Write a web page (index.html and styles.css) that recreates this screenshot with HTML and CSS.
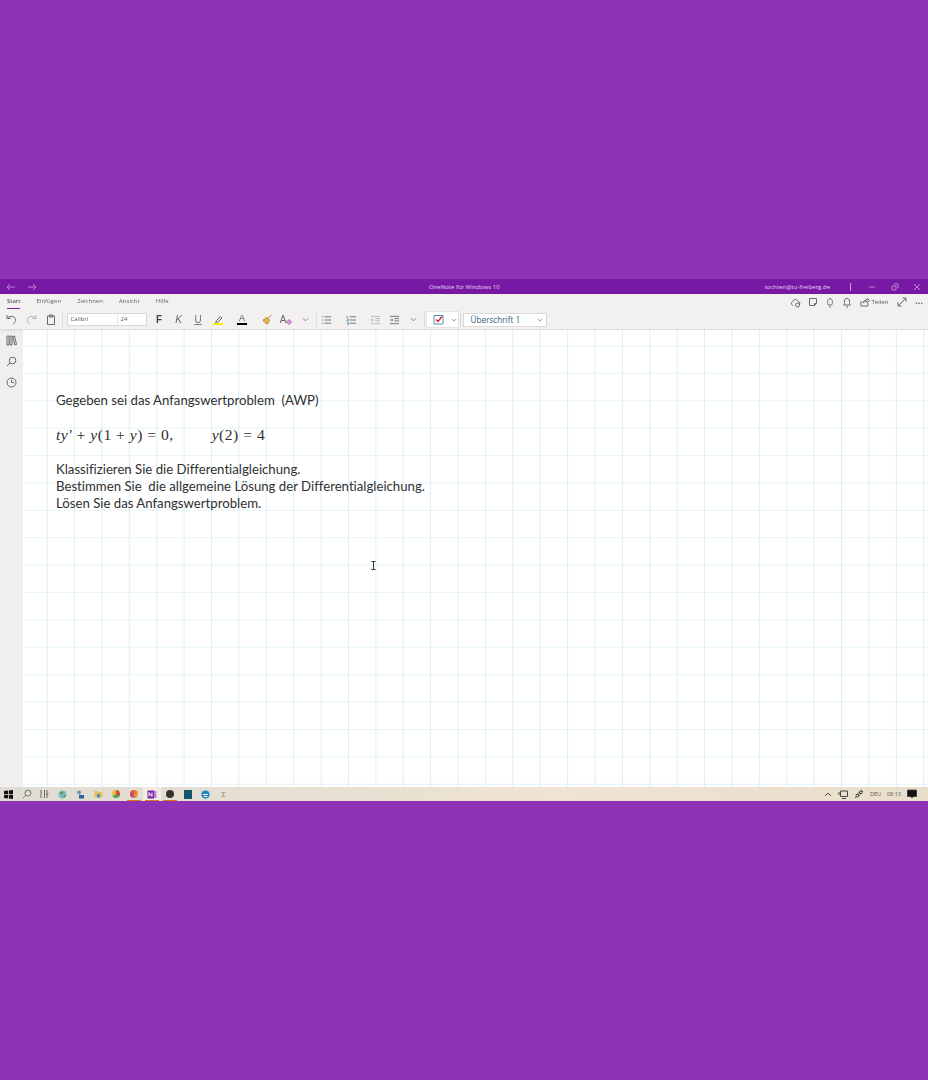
FILE: index.html
```html
<!DOCTYPE html>
<html lang="de">
<head>
    <meta charset="UTF-8">
    <meta name="viewport" content="width=device-width, initial-scale=1.0">
    <title>OneNote für Windows 10</title>
    <link rel="stylesheet" href="styles.css">
</head>
<body>
    <div class="screen">
        <div class="titlebar">
            <div class="nav-arrows">
                <svg width="10" height="10" viewBox="0 0 10 10"><path d="M9 5H1M4 2L1 5l3 3"/></svg>
                <svg width="10" height="10" viewBox="0 0 10 10"><path d="M1 5h8M6 2l3 3-3 3"/></svg>
            </div>
            <div class="app-title">OneNote für Windows 10</div>
            <div class="title-right">
                <span class="account">tochten@tu-freiberg.de</span>
                <span class="title-sep"></span>
                <svg class="win-min" width="8" height="8" viewBox="0 0 8 8"><path d="M1 4h6"/></svg>
                <svg class="win-restore" width="8" height="8" viewBox="0 0 8 8"><path d="M3 1h4v4M1 3h4v4H1z"/></svg>
                <svg class="win-close" width="8" height="8" viewBox="0 0 8 8"><path d="M1 1l6 6M7 1L1 7"/></svg>
            </div>
        </div>

        <div class="ribbon">
            <div class="tabs">
                <div class="tab-list">
                    <span class="tab active">Start</span>
                    <span class="tab">Einfügen</span>
                    <span class="tab">Zeichnen</span>
                    <span class="tab">Ansicht</span>
                    <span class="tab">Hilfe</span>
                </div>
                <div class="tab-tools">
                    <svg width="11" height="11" viewBox="0 0 11 11"><path d="M3 8.500C1 8 .8 5 2.700 4.500 3.500 2 7.500 2 8.300 4.500 10 5 10.500 7 9 8"/><circle cx="7.500" cy="8" r="2" class="fill-dark"/></svg>
                    <svg width="10" height="10" viewBox="0 0 10 10"><path d="M1.500 1.500h7v5l-2 2h-5zM6.500 8.500v-2h2"/></svg>
                    <svg width="10" height="11" viewBox="0 0 10 11"><path d="M3.500 8C2 6.500 2 2 5 1.500 8 2 8 6.500 6.500 8zM4 10h2"/></svg>
                    <svg width="10" height="11" viewBox="0 0 10 11"><path d="M1.500 8c1-1 1-2 1-4 0-3.500 5-3.500 5 0 0 2 0 3 1 4zM4 10h2"/></svg>
                    <span class="share">
                        <svg width="10" height="10" viewBox="0 0 10 10"><path d="M1 4v5h7V6M3 6c0-2 2-3 4-3V1.500L9.500 3.500 7 5.500V4.300C5 4.300 4 5 3 6z"/></svg>
                        Teilen
                    </span>
                    <svg class="expand" width="10" height="10" viewBox="0 0 10 10"><path d="M1 9l8-8M5.500 1H9v3.500M1 5.500V9h3.500"/></svg>
                    <span class="more">···</span>
                </div>
            </div>

            <div class="toolbar">
                <div class="tool-group undo-group">
                    <span class="cell"><svg width="11" height="11" viewBox="0 0 11 11"><path d="M1 1v3.500h3.500M1.200 4.500C3 2 7 1.500 9 4c1.500 2.500.5 4.500-2 6"/></svg></span>
                    <span class="cell"><svg class="faded" width="11" height="11" viewBox="0 0 11 11"><path d="M10 1v3.500H6.500M9.800 4.500C8 2 4 1.500 2 4 .5 6.500 1.500 8.500 4 10"/></svg></span>
                    <span class="cell"><svg width="10" height="11" viewBox="0 0 10 11"><path d="M1.500 2h7v8.500h-7zM3.500 1h3v2h-3z"/></svg></span>
                </div>
                <span class="divider"></span>
                <div class="font-box">
                    <span class="font-name">Calibri</span>
                    <span class="font-size">24</span>
                </div>
                <div class="tool-group format-group">
                    <span class="cell w20 fmt bold">F</span>
                    <span class="cell w19 fmt italic">K</span>
                    <span class="cell w20 fmt underline">U</span>
                    <span class="cell w20 swatch-icon">
                        <svg width="9" height="8" viewBox="0 0 9 8"><path d="M1.500 7.500l1-2L6.500 1.700 8 3 4 7z"/></svg>
                        <span class="swatch yellow"></span>
                    </span>
                    <span class="cell w28 swatch-icon">
                        <span class="letter-a">A</span>
                        <span class="swatch black"></span>
                    </span>
                    <span class="cell w22"><svg width="11" height="11" viewBox="0 0 11 11"><path class="brush" d="M1 6l4-2.500L7.500 6 5.500 10C3.500 9.500 2 8 1 6z"/><path class="brush" d="M6 4l3.500-3"/></svg></span>
                    <span class="cell w16 style-a">A<svg width="6" height="6" viewBox="0 0 6 6"><path class="pink" d="M3 .5L5.500 3 3 5.500.5 3z"/></svg></span>
                    <span class="cell w22"><svg class="chevron" width="7" height="5" viewBox="0 0 8 5"><path d="M1 1l3 3 3-3"/></svg></span>
                </div>
                <span class="divider"></span>
                <div class="tool-group list-group">
                    <span class="cell w18"><svg width="11" height="10" viewBox="0 0 12 11"><path class="blue" d="M1 2h1.500M1 5.500h1.500M1 9h1.500"/><path d="M4 2h7M4 5.500h7M4 9h7"/></svg></span>
                    <span class="cell w31"><svg width="11" height="10" viewBox="0 0 12 11"><path class="blue" d="M1 1v2.500M1 4.500h1.500v1.500H1v1M1 8h1.500v2.500H1"/><path d="M4 2h7M4 5.500h7M4 9h7"/></svg></span>
                    <span class="cell w17"><svg class="faded" width="11" height="10" viewBox="0 0 12 11"><path d="M1 1.500h10M6 4h5M6 6.500h5M1 9.500h10M4.500 5.500H1M2.500 4L1 5.500 2.500 7"/></svg></span>
                    <span class="cell w22"><svg width="11" height="10" viewBox="0 0 12 11"><path d="M1 1.500h10M6 4h5M6 6.500h5M1 9.500h10"/><path class="blue" d="M1 5.500h3.500M3 4l1.500 1.500L3 7"/></svg></span>
                    <span class="cell w16"><svg class="chevron" width="7" height="5" viewBox="0 0 8 5"><path d="M1 1l3 3 3-3"/></svg></span>
                </div>
                <span class="divider divider-todo"></span>
                <div class="todo-box">
                    <svg width="11" height="11" viewBox="0 0 11 11"><path class="box" d="M1 1.500h9v8.500H1z"/><path class="check" d="M3 5.500l2 2 4-5"/></svg>
                    <svg class="chevron" width="6" height="4" viewBox="0 0 8 5"><path d="M1 1l3 3 3-3"/></svg>
                </div>
                <span class="divider divider-style"></span>
                <div class="style-box">
                    <span>Überschrift 1</span>
                    <svg class="chevron" width="6" height="4" viewBox="0 0 8 5"><path d="M1 1l3 3 3-3"/></svg>
                </div>
            </div>
        </div>

        <div class="workspace">
            <div class="sidebar">
                <svg width="11" height="11" viewBox="0 0 11 11"><path d="M1 1h2v9H1zM4 1h2v9H4zM6.800 1.500L8.500 1 10.500 9.500 8.800 10z"/></svg>
                <svg width="11" height="11" viewBox="0 0 11 11"><circle cx="6.500" cy="4.500" r="3.300"/><path d="M4 7L1 10"/></svg>
                <svg width="11" height="11" viewBox="0 0 11 11"><circle cx="5.500" cy="5.500" r="4.500"/><path d="M5.500 2.500v3h2.500"/></svg>
            </div>
            <div class="page">
                <p class="line">Gegeben sei das Anfangswertproblem&nbsp; (AWP)</p>
                <p class="formula"><i>ty′</i> + <i>y</i>(1 + <i>y</i>) = 0,<span class="formula-gap"><i>y</i>(2) = 4</span></p>
                <div class="tasks">
                    <p class="line">Klassifizieren Sie die Differentialgleichung.</p>
                    <p class="line">Bestimmen Sie&nbsp; die allgemeine Lösung der Differentialgleichung.</p>
                    <p class="line">Lösen Sie das Anfangswertproblem.</p>
                </div>
                <svg class="cursor" width="5" height="9" viewBox="0 0 5 9"><path d="M.5.500h4M.5 8.500h4M2.500.500v8"/></svg>
            </div>
        </div>

        <div class="taskbar">
            <div class="task-icons">
                <span class="task-icon"><svg width="9" height="9" viewBox="0 0 9 9"><path class="win" d="M0 1l4-.500V4H0zM4.800.400L9 0v4H4.800zM0 4.800h4v3.700L0 8zM4.800 4.800H9V9l-4.200-.600z"/></svg></span>
                <span class="task-icon"><svg width="10" height="10" viewBox="0 0 11 11"><circle cx="6.500" cy="4.500" r="3.300"/><path d="M4 7L1 10"/></svg></span>
                <span class="task-icon"><svg width="10" height="10" viewBox="0 0 10 10"><path d="M1 1v8M4.500 1v8M7 1v8M6 5h2.500"/></svg></span>
                <span class="task-icon"><svg width="9" height="9" viewBox="0 0 9 9"><circle class="globe" cx="4.500" cy="4.500" r="4"/><path class="globe-land" d="M2 2.500l2.500-1 1 2-2 1.500zM5 6l2.500-1L7 7.500z"/></svg></span>
                <span class="task-icon"><svg width="9" height="9" viewBox="0 0 9 9"><circle class="people-a" cx="3" cy="2.500" r="2"/><path class="people-b" d="M3 5h5v3.500H3z"/></svg></span>
                <span class="task-icon"><svg width="9" height="8" viewBox="0 0 9 8"><path class="folder" d="M.5 1h3l1 1h4v5.500h-8z"/><path class="folder-blue" d="M3 4h3v3.500H3z"/></svg></span>
                <span class="task-icon"><span class="blob chrome"></span></span>
                <span class="task-icon running"><span class="blob firefox"></span></span>
                <span class="task-icon running current"><svg width="10" height="9" viewBox="0 0 10 9"><path class="onenote-tab" d="M5 1h4.500v7H5z"/><path class="onenote" d="M.5.500h6.500v8H.5z"/><path class="onenote-n" d="M2 6.500v-4l3 4v-4"/></svg></span>
                <span class="task-icon running"><span class="blob obs"></span></span>
                <span class="task-icon"><span class="blob book"></span></span>
                <span class="task-icon"><svg width="9" height="9" viewBox="0 0 9 9"><circle class="edge" cx="4.500" cy="4.500" r="4"/><path class="edge-mark" d="M2 4.500h5M3 6.500h3.500"/></svg></span>
                <span class="task-icon"><span class="sum">Σ</span></span>
            </div>
            <div class="tray">
                <svg width="8" height="5" viewBox="0 0 8 5"><path d="M1 4l3-3 3 3"/></svg>
                <svg width="10" height="9" viewBox="0 0 10 9"><path d="M2.500 1h7v5.500h-7zM4 8.500h4M1 2v3"/></svg>
                <svg width="10" height="10" viewBox="0 0 10 10"><path d="M1 9l2-2M3 5l2 2M5 3l2 2M7 1l2 2"/><circle cx="3.500" cy="6.500" r="1.500"/><circle cx="6.500" cy="3.500" r="1.500"/></svg>
                <span class="tray-text">DEU</span>
                <span class="tray-text">08:13</span>
                <svg width="10" height="10" viewBox="0 0 10 10"><path class="note" d="M.5 1h9v6.500H6L5 9 4 7.500H.5z"/></svg>
            </div>
        </div>
    </div>
</body>
</html>
```

FILE: styles.css
```css
:root {
    --purple: #8e33b6;
    --title-purple: #7719a5;
    --ribbon: #f2f1f0;
    --icon: #6a6a6a;
    --grid: #dcf0f4;
}

body {
    margin: 0;
    min-height: 1080px;
    background-color: var(--purple);
    font-family: "Open Sans", "Noto Sans", sans-serif;
    overflow: hidden;
}

svg {
    display: block;
    flex: none;
    fill: none;
    stroke: var(--icon);
    stroke-width: 1;
}

/* the reference is a soft, scaled-down capture */
.screen {
    margin-top: 279px;
    height: 522px;
    display: flex;
    flex-direction: column;
    filter: blur(0.3px);
}

.titlebar {
    height: 15px;
    background-color: var(--title-purple);
    display: flex;
    align-items: center;
    justify-content: space-between;
    position: relative;
    color: #e9d5f2;
    font-size: 6px;
}

.titlebar svg {
    stroke: #b98ad2;
}

.nav-arrows {
    display: flex;
    gap: 11px;
    margin-left: 6px;
}

.app-title {
    position: absolute;
    left: 429px;
    top: 4px;
}

.title-right {
    display: flex;
    align-items: center;
}

.account {
    margin-right: 20px;
}

.title-sep {
    width: 1px;
    height: 8px;
    background-color: #c79ddb;
}

.win-min {
    margin-left: 17px;
}

.win-restore {
    margin-left: 14.5px;
}

.win-close {
    margin: 0 7px 0 14.5px;
}

.ribbon {
    height: 36px;
    background-color: var(--ribbon);
    border-bottom: 1px solid #dddcdb;
    box-sizing: border-box;
    box-shadow: 0 1px 2px rgba(0, 0, 0, 0.06);
    position: relative;
}

.tabs {
    height: 16px;
    display: flex;
    justify-content: space-between;
}

.tab-list {
    display: flex;
    gap: 16.2px;
    margin-left: 7px;
}

.tab {
    height: 15px;
    line-height: 15px;
    font-size: 6px;
    color: #666666;
    box-sizing: border-box;
}

.tab.active {
    color: #333333;
    border-bottom: 1.5px solid #7d1fa8;
}

.tab-tools {
    display: flex;
    align-items: center;
    gap: 7px;
    margin-right: 5px;
}

.share {
    display: flex;
    align-items: center;
    gap: 1.5px;
    margin-left: 1px;
    font-size: 6px;
    color: #555555;
}

.expand {
    margin: 0 1px 0 2px;
}

.more {
    font-size: 9px;
    font-weight: 700;
    color: #666666;
}

.toolbar {
    height: 19px;
    display: flex;
    align-items: center;
    padding-left: 2px;
}

.tool-group {
    display: flex;
    align-items: center;
}

.cell {
    width: 19.5px;
    display: flex;
    align-items: center;
    justify-content: center;
}

.w16 { width: 16px; }
.w17 { width: 17px; }
.w18 { width: 18px; }
.w19 { width: 19px; }
.w20 { width: 20px; }
.w22 { width: 22px; }
.w28 { width: 28px; }
.w31 { width: 31px; }

.undo-group {
    margin-right: 1px;
}

.faded {
    opacity: 0.45;
}

.divider {
    width: 1px;
    height: 14px;
    background-color: #dcdbda;
}

.divider-todo {
    margin-left: 2px;
}

.divider-style {
    margin-left: 1px;
}

.font-box {
    display: flex;
    width: 80px;
    height: 13px;
    margin-left: 4px;
    box-sizing: border-box;
    background-color: #ffffff;
    border: 1px solid #d8d8d8;
    font-size: 6px;
    line-height: 11px;
    color: #555555;
}

.font-name {
    width: 50px;
    padding-left: 3px;
    box-sizing: border-box;
    border-right: 1px solid #e4e4e4;
}

.font-size {
    padding-left: 3px;
}

.format-group {
    margin-left: 2.5px;
}

.fmt {
    font-family: "Liberation Sans", sans-serif;
    font-size: 10px;
    color: #444444;
}

.bold {
    font-weight: 700;
}

.italic {
    font-style: italic;
    color: #666666;
}

.underline {
    text-decoration: underline;
    color: #777777;
}

.swatch-icon {
    flex-direction: column;
}

.swatch {
    width: 10px;
    height: 2px;
}

.yellow {
    background-color: #fdf000;
}

.black {
    background-color: #000000;
}

.letter-a {
    font-family: "Liberation Sans", sans-serif;
    font-size: 9px;
    line-height: 9px;
    color: #555555;
}

.brush {
    fill: #e8b34f;
    stroke: #b98f45;
}

.style-a {
    align-items: flex-end;
    font-family: "Liberation Sans", sans-serif;
    font-size: 10px;
    color: #666666;
}

.pink {
    fill: #d9a0d8;
    stroke: #b35fb5;
}

.chevron {
    stroke: #777777;
}

.list-group {
    margin-left: 0.5px;
}

.blue {
    stroke: #4a92c6;
}

.todo-box {
    display: flex;
    align-items: center;
    gap: 7px;
    width: 33px;
    height: 17px;
    padding-left: 6px;
    margin-left: 1px;
    box-sizing: border-box;
    background-color: #ffffff;
    border: 1px solid #e2e2e2;
}

.box {
    stroke: #5a8fb0;
}

.check {
    stroke: #d0202c;
    stroke-width: 1.3;
}

.style-box {
    display: flex;
    align-items: center;
    justify-content: space-between;
    width: 84px;
    height: 14px;
    margin-left: 2px;
    padding: 0 3px 0 7px;
    box-sizing: border-box;
    background-color: #ffffff;
    border: 1px solid #dadada;
    font-size: 8.2px;
    color: #2e5d78;
}

.workspace {
    flex: 1;
    display: flex;
}

.sidebar {
    width: 23px;
    background-color: #f0efee;
    display: flex;
    flex-direction: column;
    align-items: center;
    gap: 10px;
    padding-top: 5px;
    box-sizing: border-box;
}

.page {
    flex: 1;
    position: relative;
    background-color: #ffffff;
    background-image:
        linear-gradient(to right, var(--grid) 1px, transparent 1px),
        linear-gradient(to bottom, #e6f4f7 1px, transparent 1px);
    background-size: 27.4px 27.4px;
    background-position: 23.7px 15.5px;
    padding: 62px 0 0 33px;
    font-family: "Lato", sans-serif;
    font-size: 13.2px;
    font-variant-ligatures: none;
    line-height: 17px;
    color: #303030;
}

.page p {
    margin: 0;
}

.page .formula {
    margin-top: 17px;
    font-family: "Liberation Serif", serif;
    font-size: 15.6px;
    letter-spacing: 0.5px;
}

.formula-gap {
    margin-left: 38px;
}

.tasks {
    margin-top: 18px;
}

.cursor {
    position: absolute;
    left: 348px;
    top: 231px;
    stroke: #333333;
}

.taskbar {
    height: 14px;
    background: linear-gradient(to right, #dfdcd3, #efe3d3 60%, #e9ddcc);
    display: flex;
    justify-content: space-between;
    align-items: center;
}

.task-icons {
    display: flex;
    height: 14px;
}

.task-icon {
    width: 17.9px;
    height: 14px;
    display: flex;
    align-items: center;
    justify-content: center;
    box-sizing: border-box;
    position: relative;
}

.task-icon.running::after {
    content: "";
    position: absolute;
    left: 2px;
    right: 2px;
    bottom: 0;
    height: 1px;
    background-color: #d9771f;
}

.task-icon.current {
    background-color: #f3ece4;
}

.win {
    fill: #111111;
    stroke: none;
}

.blob {
    width: 8px;
    height: 8px;
    display: block;
    border-radius: 50%;
}

.globe { fill: #7fb8c4; stroke: none; }
.globe-land { fill: #4f9a55; stroke: none; }
.people-a { fill: #6f93bd; stroke: none; }
.people-b { fill: #2e5f9e; stroke: none; }
.folder { fill: #e7bf57; stroke: none; }
.folder-blue { fill: #4a8fc2; stroke: none; }
.chrome { background: conic-gradient(#d9463a 0 33%, #4ca35a 33% 66%, #e8c13c 66%); }
.firefox { background: conic-gradient(#e8642f, #e8a52f, #c8377a, #e8642f); }
.onenote { fill: #7a22a8; stroke: none; }
.onenote-tab { fill: #b78ad0; stroke: none; }
.onenote-n { stroke: #ffffff; }
.obs { background-color: #333333; }
.book { background-color: #14566d; border-radius: 0; height: 9px; }
.edge { fill: #1f83c4; stroke: none; }
.edge-mark { stroke: #ffffff; }

.sum {
    font-size: 8px;
    line-height: 8px;
    color: #8a7a66;
}

.tray {
    display: flex;
    align-items: center;
    gap: 6px;
    margin-right: 11px;
    font-size: 5.5px;
    color: #555555;
}

.tray svg {
    stroke: #444444;
}

.note {
    fill: #111111;
}
```
